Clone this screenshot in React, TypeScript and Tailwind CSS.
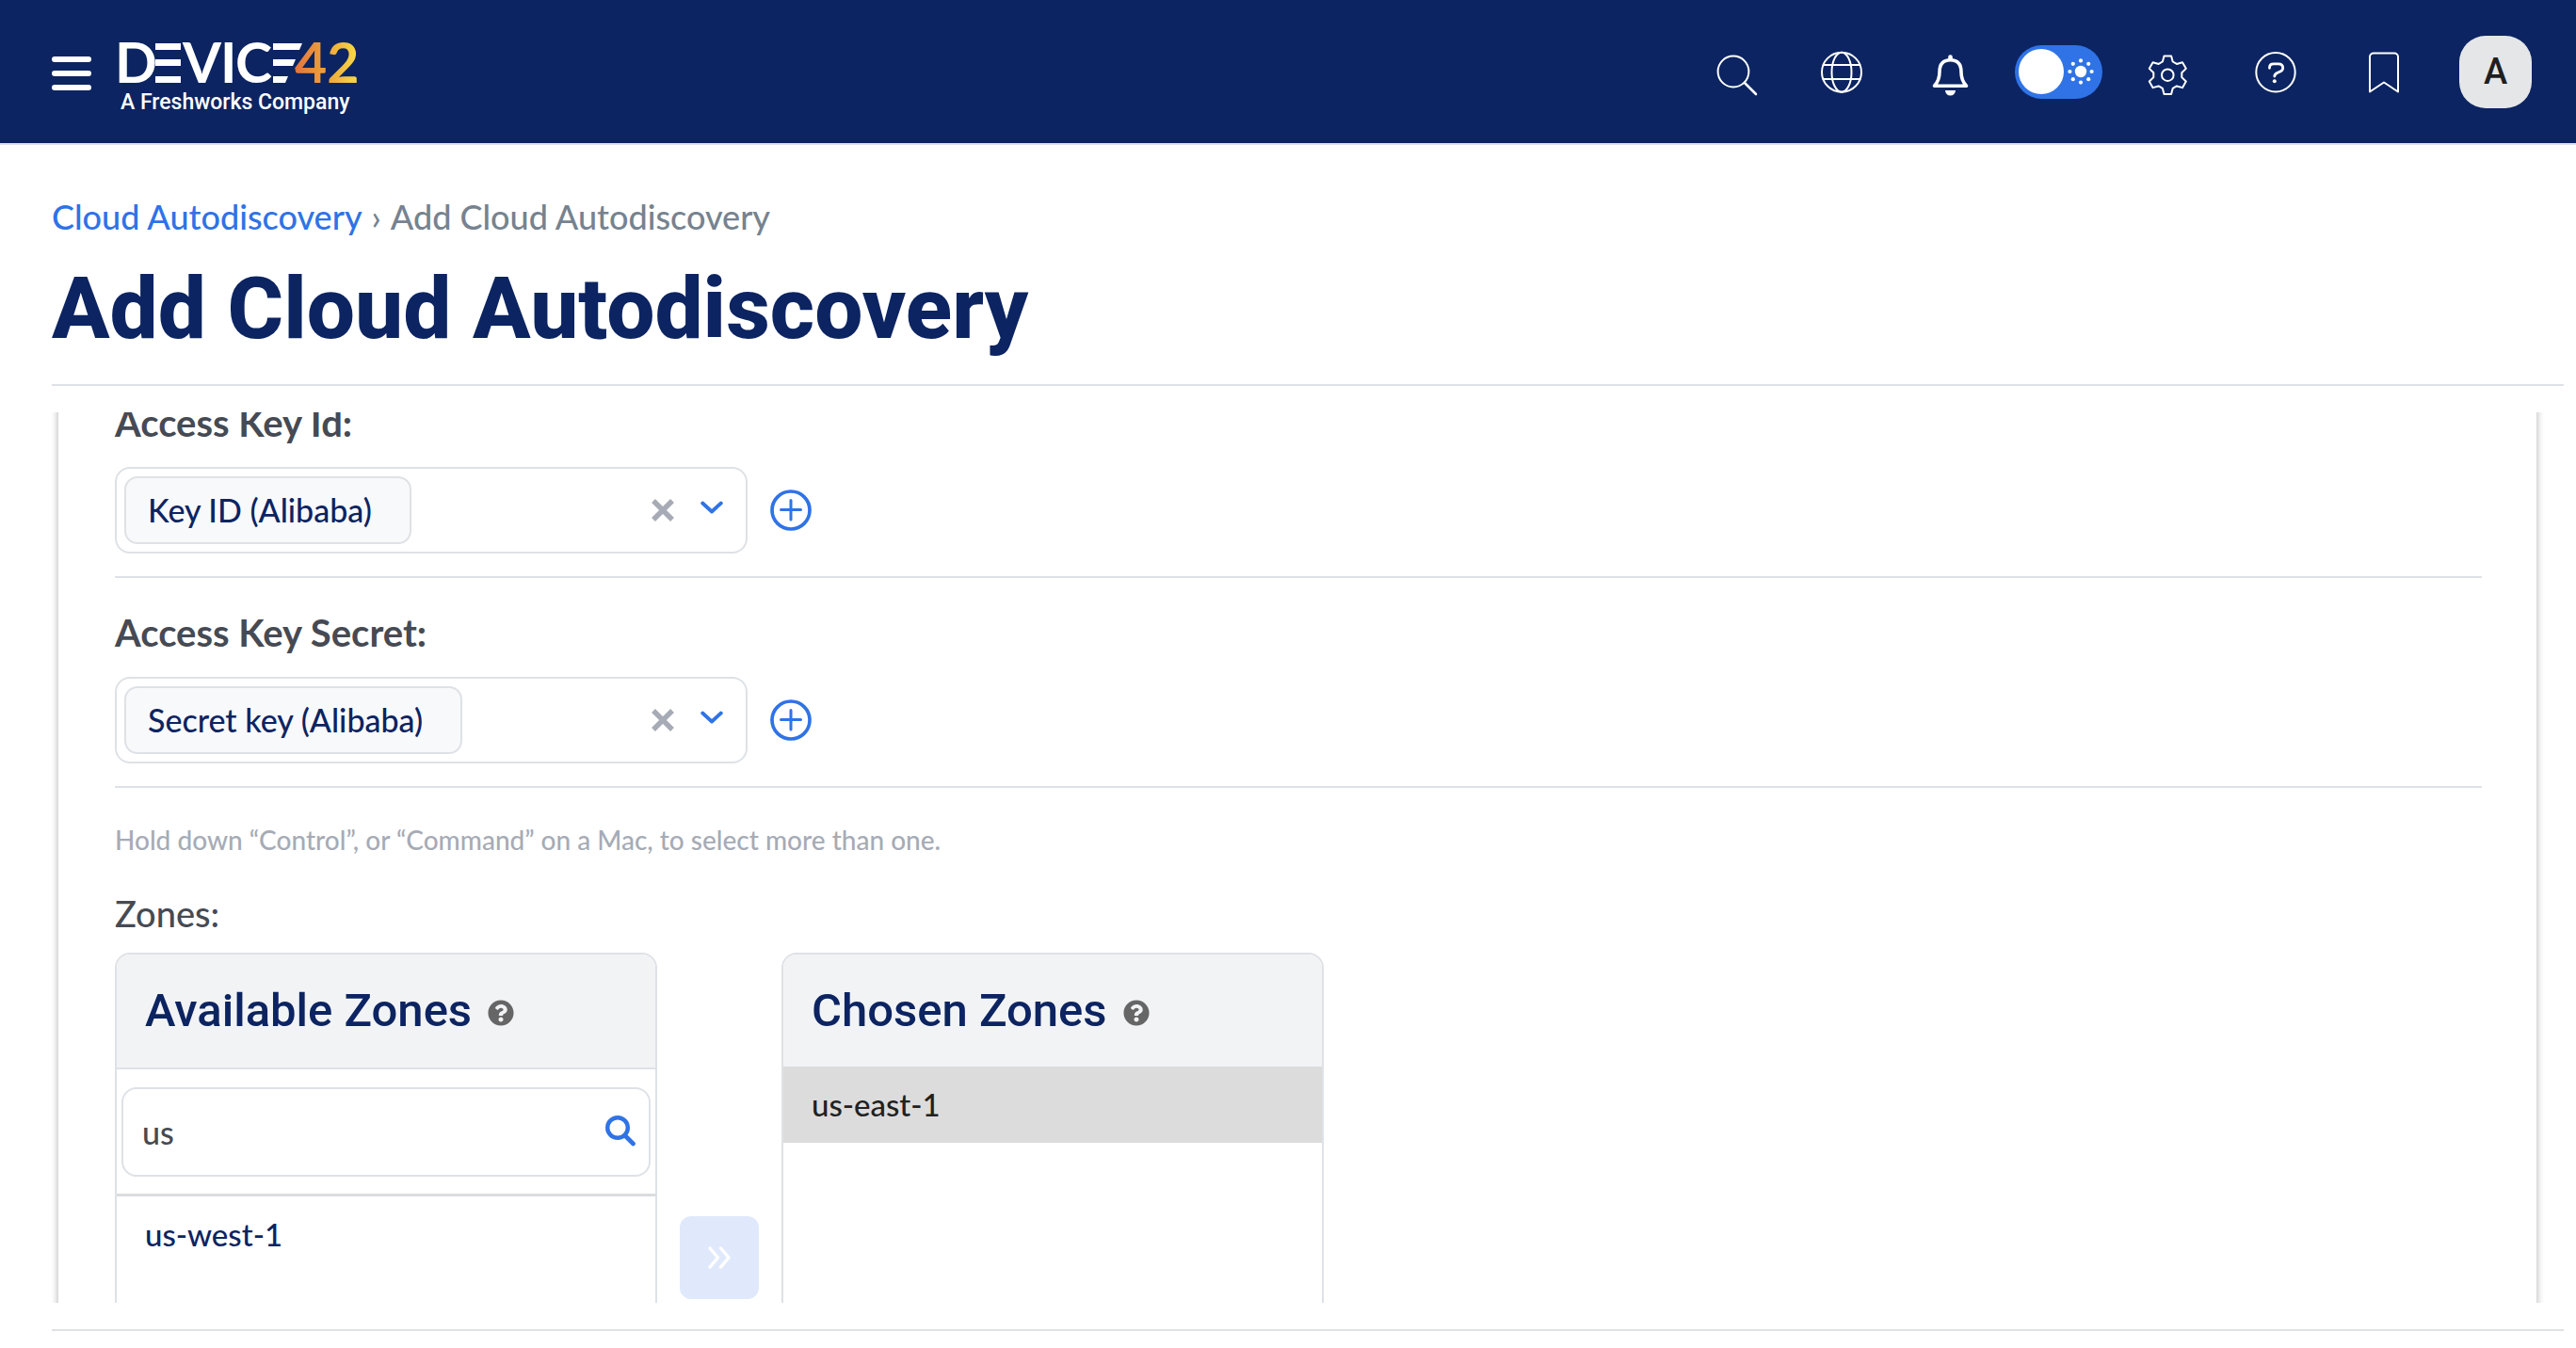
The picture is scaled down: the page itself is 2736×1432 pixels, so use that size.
import { useState, type ReactNode } from "react";

function HeaderIcon({ label, children }: { label: string; children: ReactNode }) {
  return (
    <button type="button" aria-label={label} className="flex w-[115px] justify-center">
      <svg
        viewBox="0 0 52 52"
        className="size-[52px] fill-none stroke-white stroke-2"
        strokeLinecap="round"
        strokeLinejoin="round"
        aria-hidden="true"
      >
        {children}
      </svg>
    </button>
  );
}

function gearOutline(cx: number, cy: number) {
  const tooth = [
    [-5.4, -14.2],
    [-3.8, -20.3],
    [3.8, -20.3],
    [5.4, -14.2],
  ];
  const points: string[] = [];
  for (let i = 0; i < 6; i++) {
    const a = (i * Math.PI) / 3;
    for (const [x, y] of tooth) {
      const px = cx + x * Math.cos(a) - y * Math.sin(a);
      const py = cy + x * Math.sin(a) + y * Math.cos(a);
      points.push(`${px.toFixed(2)},${py.toFixed(2)}`);
    }
  }
  return points.join(" ");
}

function Logo() {
  return (
    <a href="#" aria-label="Device42, A Freshworks Company">
      <svg viewBox="-8 0 272 92" className="h-[92px] w-[272px]" aria-hidden="true">
        <defs>
          <linearGradient id="fortyTwo" gradientUnits="userSpaceOnUse" x1="188" y1="0" x2="250" y2="0">
            <stop offset="0" stopColor="#e5763c" />
            <stop offset="0.5" stopColor="#eda23c" />
            <stop offset="1" stopColor="#f8d545" />
          </linearGradient>
        </defs>
        <g className="font-['Lato']" fill="#fff" fontSize="59" fontWeight="700">
          <text x="-5" y="58">D</text>
          <text x="67" y="58">V</text>
          <text x="107" y="58">I</text>
          <text x="123" y="58">C</text>
          <text x="186" y="58" fill="url(#fortyTwo)">
            42
          </text>
        </g>
        <path
          fill="#fff"
          d="M38 16h27v7H38zM38 33h27v7H38zM38 51h27v7H38zM163 16h31l-3 7h-28zM163 33h24l-3 7h-21zM163 51h16l-3 7h-13z"
        />
        <text x="1" y="86" className="font-['Roboto']" fill="#fff" fontSize="23" fontWeight="500">
          A Freshworks Company
        </text>
      </svg>
    </a>
  );
}

function ThemeToggle() {
  const dots = Array.from({ length: 8 }, (_, i) => (i * Math.PI) / 4);
  return (
    <div className="flex w-[115px] justify-center">
      <button
        type="button"
        role="switch"
        aria-checked="false"
        aria-label="Dark mode"
        className="flex h-[57px] w-[93px] items-center gap-[4px] rounded-full bg-[#2f73e6] pl-[4px]"
      >
        <span className="size-[48px] rounded-full bg-white" />
        <svg viewBox="0 0 28 28" className="size-[28px] fill-white" aria-hidden="true">
          <circle cx="14" cy="14" r="6.2" />
          {dots.map((a) => (
            <circle key={a} cx={14 + 11.6 * Math.cos(a)} cy={14 + 11.6 * Math.sin(a)} r="2.1" />
          ))}
        </svg>
      </button>
    </div>
  );
}

function Header() {
  return (
    <header className="flex h-[154px] shrink-0 items-center border-b-2 border-[#dee2e6] bg-[#0c2461] pr-[47px] pl-[55px]">
      <button type="button" aria-label="Open menu" className="mr-[22px] flex flex-col gap-[9px] pt-[4px]">
        <span className="h-[6px] w-[42px] rounded-full bg-white" />
        <span className="h-[6px] w-[42px] rounded-full bg-white" />
        <span className="h-[6px] w-[42px] rounded-full bg-white" />
      </button>
      <Logo />
      <nav aria-label="Tools" className="ml-auto flex items-center">
        <HeaderIcon label="Search">
          <circle cx="25" cy="26" r="16.4" />
          <path d="M37 38l12 12" strokeWidth="2.6" />
        </HeaderIcon>
        <HeaderIcon label="Language">
          <circle cx="25" cy="26.7" r="21" />
          <ellipse cx="25" cy="26.7" rx="10.5" ry="21" />
          <path d="M5.6 19h38.8M5.6 34h38.8" />
        </HeaderIcon>
        <HeaderIcon label="Notifications">
          <path
            strokeWidth="3.6"
            d="M8.5 41.2C12.6 37 14 33 14 26.5C14 18.2 18 13.8 25.5 13.8S37 18.2 37 26.5C37 33 38.4 37 42.5 41.2Z"
          />
          <path strokeWidth="4.6" d="M25.5 10.6v2" />
          <path fill="#fff" stroke="none" d="M20 46h11a5.500 5.500 0 0 1-11 0z" />
        </HeaderIcon>
        <ThemeToggle />
        <HeaderIcon label="Settings">
          <polygon points={gearOutline(26.3, 29.7)} />
          <circle cx="26.3" cy="29.7" r="6.3" />
        </HeaderIcon>
        <HeaderIcon label="Help">
          <circle cx="26" cy="26.7" r="20.7" />
          <path
            strokeWidth="2.8"
            d="M19.5 22.3v-.6c0-2.500 1.800-3.900 4.200-3.900h5.100c3 0 4.900 1.800 4.900 4.400 0 5.600-8.900 3.600-8.900 8.800"
          />
          <circle cx="24.8" cy="36.2" r="2" fill="#fff" stroke="none" />
        </HeaderIcon>
        <HeaderIcon label="Bookmarks">
          <path d="M11 47.500V10.500a4 4 0 0 1 4-4h22a4 4 0 0 1 4 4v37L26 37.500z" />
        </HeaderIcon>
        <button
          type="button"
          aria-label="Account"
          className="ml-[23px] flex size-[77px] items-center justify-center rounded-[28px] bg-[#e4e6e8] font-['Roboto'] text-[38px] leading-none font-medium text-[#1f1f1f]"
        >
          A
        </button>
      </nav>
    </header>
  );
}

function KeyField({ id, label, value }: { id: string; label: string; value: string }) {
  return (
    <div className="border-b-2 border-[#dee2e6] pb-[24px]">
      <label htmlFor={id} className="block text-[40px] leading-[48px] font-bold text-[#464a53]">
        {label}
      </label>
      <div className="mt-[23px] flex items-center gap-[24px]">
        <div className="flex h-[92px] w-[672px] items-center rounded-[16px] border-2 border-[#dee2e6] pr-[24px] pl-[8px]">
          <select
            id={id}
            defaultValue={value}
            className="h-[72px] appearance-none rounded-[14px] border-2 border-[#dee2e6] bg-[#f8f9fb] pr-[40px] pl-[23px] text-[34px] leading-[44px] font-medium text-[#0c2461] [field-sizing:content]"
          >
            <option>{value}</option>
          </select>
          <button type="button" aria-label={`Clear ${label}`} className="ml-auto">
            <svg viewBox="0 0 24 24" className="size-[24px] stroke-[#a6abb5]" strokeWidth="5.5" aria-hidden="true">
              <path d="M2 2l20 20M22 2L2 22" />
            </svg>
          </button>
          <button type="button" aria-label={`Open ${label}`} className="ml-[28px]">
            <svg
              viewBox="0 0 24 24"
              className="size-[24px] fill-none stroke-[#2f73e6]"
              strokeWidth="3.8"
              strokeLinecap="round"
              strokeLinejoin="round"
              aria-hidden="true"
            >
              <path d="M2.200 4.500L12 13.500l9.800-9" />
            </svg>
          </button>
        </div>
        <button type="button" aria-label={`Add ${label}`}>
          <svg
            viewBox="0 0 44 44"
            className="size-[44px] fill-none stroke-[#2f73e6]"
            strokeWidth="3.7"
            strokeLinecap="round"
            aria-hidden="true"
          >
            <circle cx="22" cy="22" r="20" />
            <path strokeWidth="3" d="M22 11.500v20.500M11.500 21.500h21" />
          </svg>
        </button>
      </div>
    </div>
  );
}

function HelpDot({ label }: { label: string }) {
  return (
    <button type="button" aria-label={label} className="text-[#666]">
      <svg viewBox="0 0 512 512" className="size-[28px] fill-current" aria-hidden="true">
        <path d="M504 256c0 137-111 248-248 248S8 393 8 256 119 8 256 8s248 111 248 248zM262.700 90c-54.500 0-89.300 23-116.500 63.800-3.500 5.300-2.400 12.400 2.700 16.300l34.700 26.300c5.200 3.900 12.600 3 16.700-2.100 17.900-22.700 30.100-35.800 57.300-35.800 20.400 0 45.700 13.100 45.700 33 0 15-12.400 22.700-32.500 34C247.100 238.500 216 254.900 216 296v4c0 6.600 5.400 12 12 12h56c6.600 0 12-5.400 12-12v-1.300c0-28.500 83.200-29.600 83.200-106.700 0-58-60.200-102-116.500-102zM256 338c-25.400 0-46 20.600-46 46s20.600 46 46 46 46-20.600 46-46-20.600-46-46-46z" />
      </svg>
    </button>
  );
}

function ZonePanel({ title, headerClass, children }: { title: string; headerClass: string; children: ReactNode }) {
  return (
    <section className="h-[480px] w-[576px] overflow-hidden rounded-[16px] border-2 border-[#dee2e6]">
      <div className={`flex items-baseline gap-[17px] bg-[#f2f3f5] px-[30px] pt-[30px] ${headerClass}`}>
        <h2 className="font-['Roboto'] text-[49px] leading-[60px] font-medium text-[#0c2461]">{title}</h2>
        <HelpDot label={`About ${title}`} />
      </div>
      {children}
    </section>
  );
}

export default function App() {
  const [filter, setFilter] = useState("us");
  return (
    <div className="flex h-screen flex-col bg-white font-['Lato',sans-serif]">
      <Header />
      <main className="flex min-h-0 flex-1 flex-col pt-[54px] pr-[13px] pb-[18px] pl-[55px]">
        <nav aria-label="Breadcrumb" className="flex gap-[10px] text-[36px] leading-[44px] font-medium text-[#76838f]">
          <a href="#" className="text-[#2f73e6]">
            Cloud Autodiscovery
          </a>
          <span>›</span>
          <span>Add Cloud Autodiscovery</span>
        </nav>
        <h1 className="mt-[28px] border-b-2 border-[#dee2e6] pb-[32px] font-['Roboto'] text-[91px] leading-[96px] font-extrabold text-[#0c2461]">
          Add Cloud Autodiscovery
        </h1>
        <div className="mt-[28px] min-h-0 flex-1 overflow-hidden">
          <form className="-mt-[13px] mr-[29px] ml-[7px] pr-[58px] pl-[60px] shadow-[0_0_8px_rgba(0,0,0,0.32)]">
            <KeyField id="key-id" label="Access Key Id:" value="Key ID (Alibaba)" />
            <div className="h-[34px]" />
            <KeyField id="key-secret" label="Access Key Secret:" value="Secret key (Alibaba)" />
            <p className="mt-[37px] text-[28px] leading-[36px] font-medium text-[#a6abb5]">
              Hold down “Control”, or “Command” on a Mac, to select more than one.
            </p>
            <p className="mt-[36px] text-[38px] leading-[48px] font-medium text-[#464a53]">Zones:</p>
            <div className="mt-[18px] flex items-start gap-[24px]">
              <ZonePanel title="Available Zones" headerClass="border-b-2 border-[#dee2e6] pb-[30px]">
                <div className="border-b-[3px] border-[#dadcde] px-[5px] pt-[19px] pb-[18px]">
                  <div className="flex h-[95px] items-center rounded-[16px] border-2 border-[#dee2e6] pr-[14px] pl-[20px]">
                    <input
                      type="text"
                      aria-label="Filter available zones"
                      value={filter}
                      onChange={(e) => setFilter(e.target.value)}
                      className="min-w-0 flex-1 text-[34px] leading-[44px] font-medium text-[#464a53] outline-none"
                    />
                    <button type="button" aria-label="Search zones">
                      <svg
                        viewBox="0 0 32 36"
                        className="h-[36px] w-[32px] fill-none stroke-[#2f73e6]"
                        strokeLinecap="round"
                        aria-hidden="true"
                      >
                        <circle cx="13" cy="13" r="10.8" strokeWidth="4.4" />
                        <path d="M21.500 22l8 8" strokeWidth="4.6" />
                      </svg>
                    </button>
                  </div>
                </div>
                <ul role="listbox" aria-label="Available Zones">
                  <li
                    role="option"
                    aria-selected="false"
                    className="flex h-[81px] items-center px-[30px] text-[33px] font-medium text-[#0c2461]"
                  >
                    us-west-1
                  </li>
                </ul>
              </ZonePanel>
              <button
                type="button"
                aria-label="Choose selected zones"
                className="mt-[280px] flex h-[88px] w-[84px] items-center justify-center rounded-[12px] bg-[#e0e9fc]"
              >
                <svg
                  viewBox="0 0 26 26"
                  className="size-[26px] fill-none stroke-white"
                  strokeWidth="3.4"
                  strokeLinecap="round"
                  strokeLinejoin="round"
                  aria-hidden="true"
                >
                  <path d="M3 3l8.500 10L3 23M14.500 3L23 13l-8.500 10" />
                </svg>
              </button>
              <ZonePanel title="Chosen Zones" headerClass="pb-[29px]">
                <ul role="listbox" aria-label="Chosen Zones">
                  <li
                    role="option"
                    aria-selected="true"
                    className="flex h-[81px] items-center bg-[#dcdcdc] px-[30px] text-[33px] font-medium text-[#212121]"
                  >
                    us-east-1
                  </li>
                </ul>
              </ZonePanel>
            </div>
          </form>
        </div>
        <hr className="mt-[28px] border-t-2 border-[#dee2e6]" />
      </main>
    </div>
  );
}
